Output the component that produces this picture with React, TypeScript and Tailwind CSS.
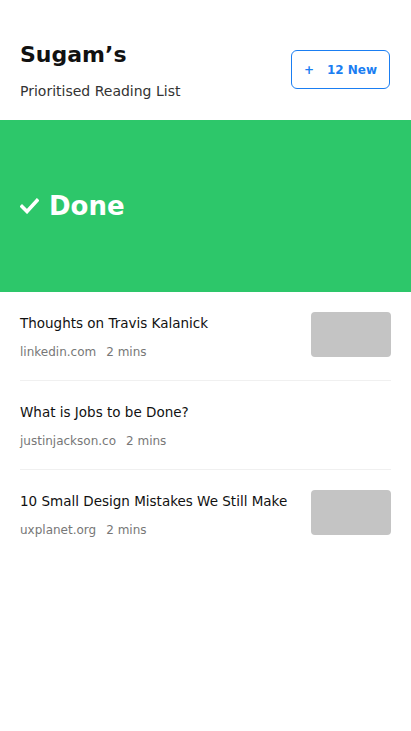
import React from "react";

const items = [
  { title: "Thoughts on Travis Kalanick", source: "linkedin.com", time: "2 mins", thumb: true },
  { title: "What is Jobs to be Done?", source: "justinjackson.co", time: "2 mins", thumb: false },
  { title: "10 Small Design Mistakes We Still Make", source: "uxplanet.org", time: "2 mins", thumb: true },
];

function CheckIcon() {
  return (
    <svg width="19" height="16" viewBox="0 0 19 16" fill="none">
      <path d="M2 8.5 L7 13.5 L17 2.5" stroke="white" strokeWidth="3.6" strokeLinecap="square" />
    </svg>
  );
}

export default function App() {
  return (
    <div className="w-[411px] min-h-[731px] bg-white" style={{ fontFamily: "'DejaVu Sans', sans-serif" }}>
      <header className="flex items-start justify-between px-5 pt-[40px] h-[120px]">
        <div>
          <h1 className="text-[22px] font-bold leading-[30px] text-[#111]">Sugam’s</h1>
          <p className="mt-[12px] text-[14px] leading-[18px] text-[#333]">Prioritised Reading List</p>
        </div>
        <button className="mt-[10px] mr-[1px] w-[99px] h-[39px] rounded-[6px] border border-[#1a7ef2] text-[#1a7ef2] text-[12px] font-bold flex items-center justify-center gap-[13px]">
          <span>+</span>
          <span>12 New</span>
        </button>
      </header>

      <section className="h-[172px] bg-[#2dc76a] flex items-center px-5 gap-[10px]">
        <CheckIcon />
        <span className="text-[26px] font-bold text-white leading-none">Done</span>
      </section>

      <ul className="px-5">
        {items.map((item, i) => (
          <li
            key={i}
            className={`h-[89px] flex items-start justify-between pt-[20px] ${i < items.length - 1 ? "border-b border-[#f0f0f0]" : ""}`}
          >
            <div>
              <p className="text-[13.5px] leading-[22px] text-[#111]">{item.title}</p>
              <p className="mt-[10px] text-[12px] leading-[16px] text-[#777]">
                {item.source}
                <span className="ml-[10px]">{item.time}</span>
              </p>
            </div>
            {item.thumb && <div className="w-[80px] h-[45px] rounded-[4px] bg-[#c4c4c4] shrink-0" />}
          </li>
        ))}
      </ul>
    </div>
  );
}
